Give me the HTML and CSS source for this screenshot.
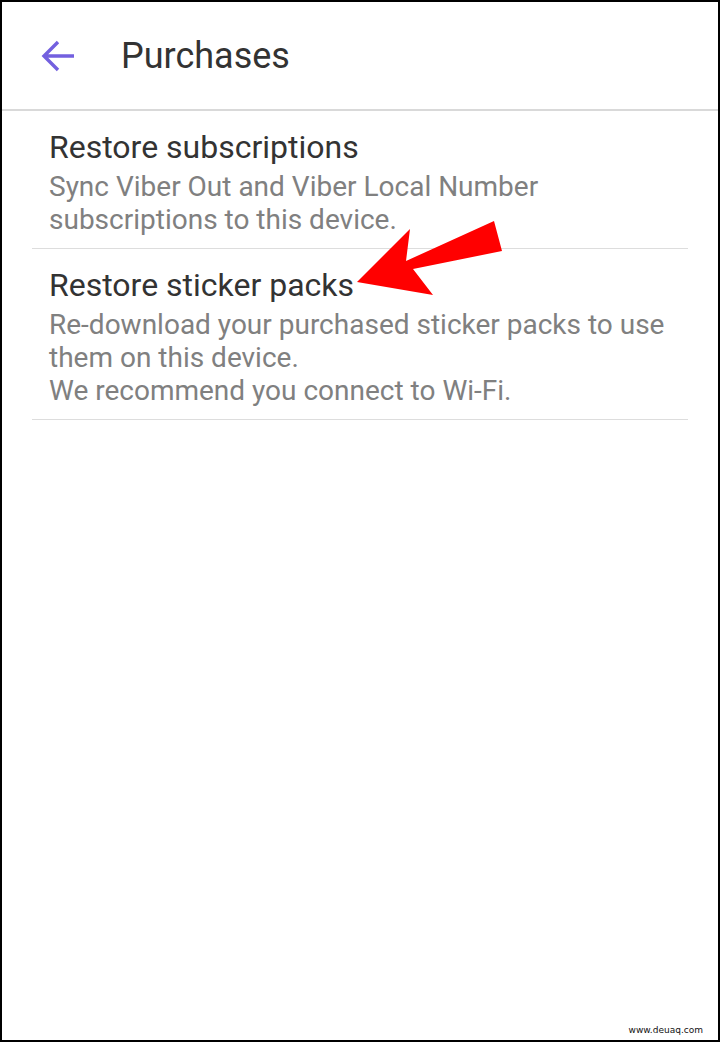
FILE: index.html
```html
<!DOCTYPE html>
<html>
<head>
<meta charset="utf-8">
<link rel="stylesheet" href="styles.css">
</head>
<body>
<div class="frame">
  <header class="topbar">
    <svg class="back" width="36" height="36" viewBox="0 0 36 36">
      <path d="M34 18 H5 M18 4 L4 18 L18 32" fill="none" stroke="#7360df" stroke-width="3.4" stroke-linecap="butt" stroke-linejoin="miter"/>
    </svg>
    <h1 class="title">Purchases</h1>
  </header>
  <ul class="list">
    <li class="item item-first">
      <div class="item-title">Restore subscriptions</div>
      <div class="item-desc">Sync Viber Out and Viber Local Number<br>subscriptions to this device.</div>
    </li>
    <li class="item item-second">
      <div class="item-title">Restore sticker packs</div>
      <div class="item-desc">Re-download your purchased sticker packs to use<br>them on this device.<br>We recommend you connect to Wi-Fi.</div>
    </li>
  </ul>
  <svg class="pointer" width="720" height="1042" viewBox="0 0 720 1042">
    <polygon points="357,282 410,229 406,261 494,221 502,251 413,269 433,295" fill="#ff0000"/>
  </svg>
  <div class="watermark">www.deuaq.com</div>
</div>
</body>
</html>
```
FILE: styles.css
```css
html, body {
  margin: 0;
  padding: 0;
  background: #ffffff;
}
.frame {
  position: relative;
  width: 720px;
  height: 1042px;
  box-sizing: border-box;
  border: 2px solid #000000;
  background: #ffffff;
  font-family: Roboto, "Noto Sans", sans-serif;
  overflow: hidden;
}
.topbar {
  display: flex;
  align-items: center;
  border-bottom: 2px solid #d9d9d9;
  box-sizing: border-box;
  height: 109px;
}
.back {
  margin-left: 38px;
  flex: none;
}
.title {
  margin: 0 0 0 45px;
  font-size: 36px;
  font-weight: 400;
  color: #333333;
  line-height: 40px;
}
.list {
  list-style: none;
  margin: 0 30px;
  padding: 0;
}
.item {
  border-bottom: 1px solid #dddddd;
  padding: 18px 0 12px 17px;
}
.item-title {
  font-size: 32px;
  line-height: 36px;
  color: #333333;
}
.item-desc {
  margin-top: 5px;
  font-size: 28px;
  line-height: 33px;
  color: #808080;
}
.pointer {
  position: absolute;
  left: -2px;
  top: -2px;
  pointer-events: none;
}
.watermark {
  position: absolute;
  right: 15px;
  bottom: 5px;
  font-family: "DejaVu Sans", sans-serif;
  font-size: 9px;
  color: #111111;
}
```
